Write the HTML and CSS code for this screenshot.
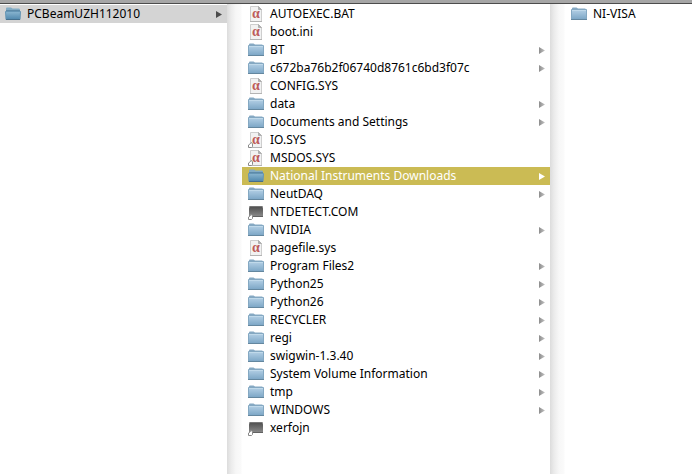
FILE: index.html
```html
<!DOCTYPE html>
<html lang="en">
<head>
<meta charset="utf-8">
<title>PCBeamUZH112010</title>
<link rel="stylesheet" href="styles.css">
</head>
<body>
<svg class="defs" aria-hidden="true">
  <defs>
    <linearGradient id="blue" x1="0" y1="0" x2="0" y2="1">
      <stop offset="0" stop-color="#b5d1e6"/><stop offset="1" stop-color="#7ba5c5"/>
    </linearGradient>
    <linearGradient id="deep" x1="0" y1="0" x2="0" y2="1">
      <stop offset="0" stop-color="#8ab5d0"/><stop offset="1" stop-color="#5088ad"/>
    </linearGradient>
    <linearGradient id="dark" x1="0" y1="0" x2="0" y2="1">
      <stop offset="0" stop-color="#4f4f4f"/><stop offset="1" stop-color="#8a8a8a"/>
    </linearGradient>
    <linearGradient id="fade" x1="0" y1="0" x2="1" y2="0">
      <stop offset="0" stop-color="#8c8c8c"/><stop offset="1" stop-color="#c4c4c4"/>
    </linearGradient>
    <symbol id="folder" viewBox="0 0 16 16">
      <path d="M1 4V2.500Q1 1.500 2 1.500H5.500L7 2.500H14Q15 2.500 15 4Z" fill="#86a9c3"/>
      <path d="M.5 3.500H15.500V13.500H.5Z" fill="url(#blue)" stroke="#84a8c2"/>
      <path d="M1 4.500H15" stroke="#c0d9ea"/>
      <path d="M0 13.500H16" stroke="#64879f"/>
    </symbol>
    <symbol id="folder-open" viewBox="0 0 16 16">
      <path d="M1 5V2.500Q1 1.500 2 1.500H6L7.500 2.500H14Q15 2.500 15 4V5Z" fill="#82abc4"/>
      <path d="M1 4.500H15" stroke="#5d8aa8"/>
      <path d="M.5 5.500H15.500L15 13.500H1Z" fill="url(#deep)" stroke="#6595b4"/>
      <path d="M1 13.500H15" stroke="#456f8c"/>
    </symbol>
    <symbol id="file" viewBox="0 0 16 16">
      <path d="M2.500 .5H10.500L13.500 3.500V15.500H2.500Z" fill="#f2f2f2" stroke="#cecece"/>
      <path d="M10.500 .5V3.500H13.500Z" fill="#b0b0b0" stroke="#b0b0b0"/>
      <path d="M2 15.500H14" stroke="#b4b4b4"/>
      <text x="8" y="12" text-anchor="middle" class="alpha">α</text>
    </symbol>
    <symbol id="alias" viewBox="0 0 6 6">
      <path d="M1.500 2.500L3 .5L4.500 1.500V4.500L3.500 5.500H.5V3Z" fill="#fff" stroke="#8a8a8a"/>
    </symbol>
    <symbol id="exec" viewBox="0 0 16 16">
      <path d="M1.500 2.500H14.500L15 4.500V12.500H1V4.500Z" fill="url(#dark)"/>
      <path d="M1.500 2.500H14.500" stroke="#777"/>
      <path d="M1 12.500H15" stroke="#626262"/>
    </symbol>
    <symbol id="arrow" viewBox="0 0 6 7">
      <path d="M0 0L6 3.500L0 7Z"/>
    </symbol>
  </defs>
</svg>
<div class="topbar"></div>
<main class="browser">
  <ul class="column first">
    <li><a class="row path" href="#"><svg class="icon"><use href="#folder-open"/></svg><span class="name">PCBeamUZH112010</span><svg class="arrow"><use href="#arrow"/></svg></a></li>
  </ul>
  <div class="divider"></div>
  <ul class="column" id="files"></ul>
  <div class="divider"></div>
  <ul class="column">
    <li><a class="row" href="#"><svg class="icon"><use href="#folder"/></svg><span class="name">NI-VISA</span></a></li>
  </ul>
</main>
<script src="files.js"></script>
</body>
</html>
```

FILE: styles.css
```css
* { box-sizing: border-box; }
body {
  margin: 0;
  min-height: 100vh;
  display: flex;
  flex-direction: column;
  background: #fff;
  color: #000;
  font: 12px/18px "Noto Sans", "Open Sans", sans-serif;
  overflow: hidden;
}
.defs { position: absolute; width: 0; height: 0; }
.topbar { height: 4px; background: #a6a6a6; border-bottom: 1px solid #4c4c4c; }
.browser {
  flex: 1;
  display: grid;
  grid-template-columns: 227fr 15px 308fr 15px 127fr;
}
.column { margin: 0; padding: 1px 0 0; list-style: none; min-width: 0; }
.divider {
  background: linear-gradient(to right, #dcdcdc, #ebebeb 4px, #f7f7f7 9px, #fafafa 14px, #fff);
}
.row {
  display: flex;
  align-items: center;
  gap: 6px;
  height: 18px;
  padding: 0 5px 0 6px;
  color: inherit;
  text-decoration: none;
}
.first .row { padding-left: 5px; }
.name { flex: 1; white-space: nowrap; }
.icon { flex: none; width: 16px; height: 16px; }
.alpha { font: bold 14px "Liberation Serif", serif; fill: #bd5c5a; }
.arrow { flex: none; width: 6px; height: 7px; fill: url(#fade); }
.path { background: #d4d4d4; }
.path .arrow { fill: #4c4c4c; }
.selected { background: #cbbb54; color: #fff; }
.selected .arrow { fill: #fff; }
```

FILE: files.js
```js
const files = [
  ["AUTOEXEC.BAT", "file"], ["boot.ini", "file"], ["BT", "folder"],
  ["c672ba76b2f06740d8761c6bd3f07c", "folder"], ["CONFIG.SYS", "file"],
  ["data", "folder"], ["Documents and Settings", "folder"],
  ["IO.SYS", "file", true], ["MSDOS.SYS", "file", true],
  ["National Instruments Downloads", "folder-open"], ["NeutDAQ", "folder"],
  ["NTDETECT.COM", "exec", true], ["NVIDIA", "folder"], ["pagefile.sys", "file"],
  ["Program Files2", "folder"], ["Python25", "folder"], ["Python26", "folder"],
  ["RECYCLER", "folder"], ["regi", "folder"], ["swigwin-1.3.40", "folder"],
  ["System Volume Information", "folder"], ["tmp", "folder"],
  ["WINDOWS", "folder"], ["xerfojn", "exec", true]
];
document.getElementById("files").innerHTML = files.map(([name, icon, alias]) => {
  const badge = alias ? '<use href="#alias" x="0" y="10" width="6" height="6"/>' : "";
  const arrow = icon.startsWith("folder") ? '<svg class="arrow"><use href="#arrow"/></svg>' : "";
  const state = icon === "folder-open" ? " selected" : "";
  return `<li><a class="row${state}" href="#"><svg class="icon"><use href="#${icon}"/>${badge}</svg><span class="name">${name}</span>${arrow}</a></li>`;
}).join("");
```
